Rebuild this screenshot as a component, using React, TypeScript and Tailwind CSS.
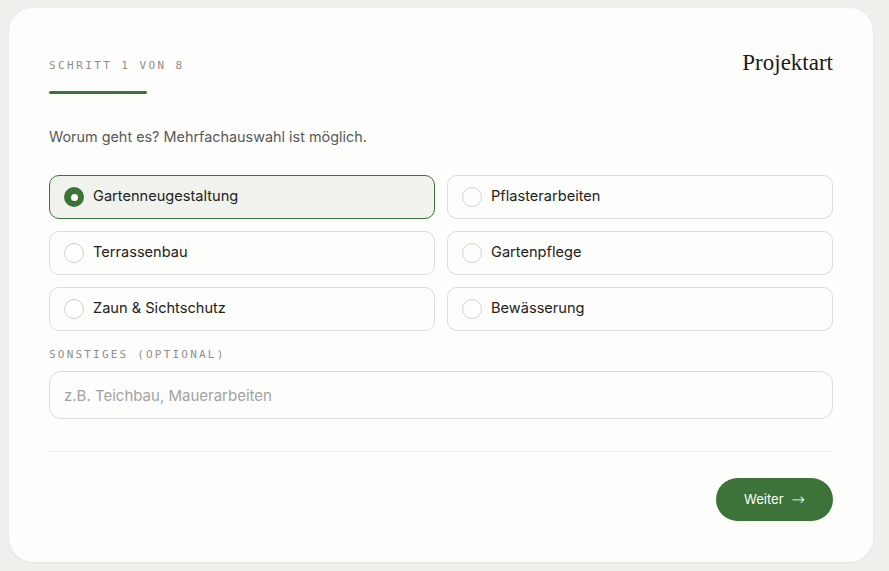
import { useState } from 'react';

const options = [
  'Gartenneugestaltung',
  'Pflasterarbeiten',
  'Terrassenbau',
  'Gartenpflege',
  'Zaun & Sichtschutz',
  'Bewässerung',
];

export default function App() {
  const [selected, setSelected] = useState<string[]>(['Gartenneugestaltung']);

  const toggle = (o: string) =>
    setSelected((s) => (s.includes(o) ? s.filter((x) => x !== o) : [...s, o]));

  return (
    <div className="w-[889px] h-[571px] bg-[#efefeb] overflow-hidden font-['Inter','Liberation_Sans',sans-serif]">
      <div className="ml-[9px] mt-2 w-[864px] h-[554px] rounded-[24px] bg-[#fdfdfc] shadow-[0_1px_3px_rgba(0,0,0,0.05)] px-10 pt-[41px]">
        {/* Header */}
        <div className="flex items-start justify-between">
          <div>
            <div className="mt-[9px] text-[11px] leading-4 tracking-[0.22em] text-[#8f8f8a] font-['DejaVu_Sans_Mono','Liberation_Mono',monospace]">
              SCHRITT 1 VON 8
            </div>
            <div className="mt-[17px] h-[3px] w-[98px] rounded-full bg-[#3d7338]" />
          </div>
          <h1 className="text-[23px] leading-7 text-[#1c1c1a] font-['Liberation_Serif','DejaVu_Serif',serif]">
            Projektart
          </h1>
        </div>

        <p className="mt-[33px] text-[14.4px] leading-5 text-[#5a5a56]">
          Worum geht es? Mehrfachauswahl ist möglich.
        </p>

        {/* Options */}
        <div className="mt-7 grid grid-cols-2 gap-3">
          {options.map((o) => {
            const on = selected.includes(o);
            return (
              <button
                key={o}
                onClick={() => toggle(o)}
                className={
                  on
                    ? 'h-11 flex items-center gap-[9px] pl-[14px] rounded-[10px] border border-[#3d7338] bg-[#f0f2ee] text-left'
                    : 'h-11 flex items-center gap-[9px] pl-[14px] rounded-[10px] border border-[#dcdcd8] bg-[#fdfdfc] text-left'
                }
              >
                {on ? (
                  <span className="w-5 h-5 rounded-full bg-[#3d7338] flex items-center justify-center">
                    <span className="w-[7px] h-[7px] rounded-full bg-white" />
                  </span>
                ) : (
                  <span className="w-5 h-5 rounded-full border border-[#d0d0cc] bg-white" />
                )}
                <span className="text-[14.6px] text-[#222220]">{o}</span>
              </button>
            );
          })}
        </div>

        <div className="mt-4 text-[11px] leading-4 tracking-[0.2em] text-[#8f8f8a] font-['DejaVu_Sans_Mono','Liberation_Mono',monospace]">
          SONSTIGES (OPTIONAL)
        </div>
        <input
          placeholder="z.B. Teichbau, Mauerarbeiten"
          className="mt-2 h-12 w-full rounded-[12px] border border-[#dcdcd8] bg-[#fdfdfc] px-[14px] text-[15px] text-[#222] placeholder:text-[#a3a39f] outline-none"
        />

        <div className="mt-8 border-t border-[#ecece8]" />

        <div className="mt-[26px] flex justify-end">
          <button className="h-[43px] w-[117px] rounded-full bg-[#3d7338] text-white text-[13px] flex items-center justify-center gap-2">
            Weiter <span className="text-[16px] font-['DejaVu_Sans',sans-serif] font-light">→</span>
          </button>
        </div>
      </div>
    </div>
  );
}
